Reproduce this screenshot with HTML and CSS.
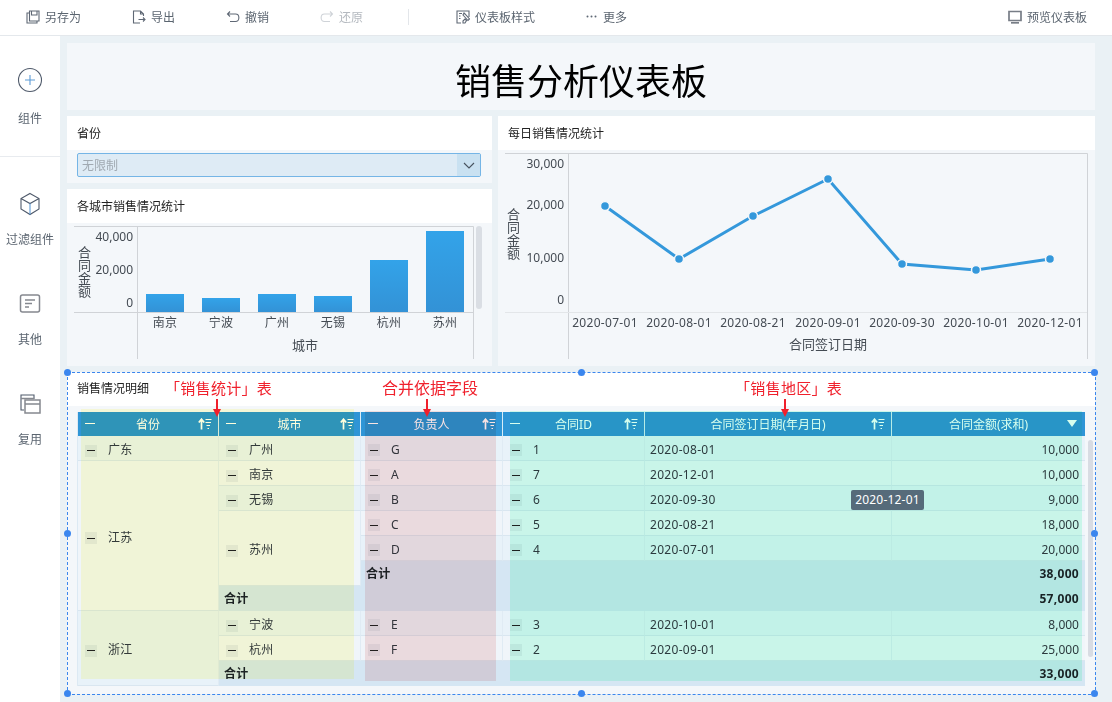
FILE: index.html
```html
<!DOCTYPE html>
<html lang="zh">
<head>
  <meta charset="utf-8">
  <title>销售分析仪表板</title>
  <link rel="stylesheet" href="styles.css">
</head>
<body>
  <header class="toolbar">
    <a class="tool">
      <svg viewBox="0 0 14 14"><path d="M3.5 1H13V11H3.5Z M5.5 1V5H11V1 M3.5 3H1V13H11V11"/></svg>
      <span>另存为</span>
    </a>
    <a class="tool">
      <svg viewBox="0 0 14 14"><path d="M8 13H1.5V1H8.5L11.5 4V6 M8.5 1V4H11.5 M6.5 9.5H13 M11 7.5L13 9.5L11 11.5"/></svg>
      <span>导出</span>
    </a>
    <a class="tool">
      <svg viewBox="0 0 14 14"><path d="M4 1.5L1.5 4L4 6.5 M1.5 4H9.5C14 4 14 11.5 9.5 11.5H4"/></svg>
      <span>撤销</span>
    </a>
    <a class="tool disabled">
      <svg viewBox="0 0 14 14"><path d="M10 1.5L12.5 4L10 6.5 M12.5 4H4.5C0 4 0 11.5 4.5 11.5H10"/></svg>
      <span>还原</span>
    </a>
    <i class="tool-sep"></i>
    <a class="tool">
      <svg viewBox="0 0 14 14"><path d="M5 13H1V1H13V7 M3 3.5H6 M3 6H4.5 M3 8.5H4.5 M8 3L7 5L12 10.5L13.5 9L9 4Z M7 11L9 9L10.5 10.5L9 13H7Z"/></svg>
      <span>仪表板样式</span>
    </a>
    <a class="tool more">
      <svg class="dots" viewBox="0 0 11 3"><circle cx="1.5" cy="1.5" r="1"/><circle cx="5.5" cy="1.5" r="1"/><circle cx="9.5" cy="1.5" r="1"/></svg>
      <span>更多</span>
    </a>
    <a class="tool preview">
      <svg viewBox="0 0 14 14"><path class="thick" d="M1 1.5H13V10.5H1Z"/><path class="thick" d="M3 12.8H11"/></svg>
      <span>预览仪表板</span>
    </a>
  </header>

  <div class="layout">
    <nav class="sidebar">
      <div class="side-top">
        <div class="side-item">
          <svg viewBox="0 0 26 26"><circle cx="13" cy="13" r="11.5"/><path class="blue" d="M13 8V18 M8 13H18"/></svg>
          <span>组件</span>
        </div>
      </div>
      <div class="side-list">
        <div class="side-item">
          <svg viewBox="0 0 26 26"><path d="M13 2.5L22 7.5V18L13 23.5L4 18V7.5Z M4 7.5L13 12.5L22 7.5"/><path class="blue" d="M13 12.5V23.5"/></svg>
          <span>过滤组件</span>
        </div>
        <div class="side-item">
          <svg viewBox="0 0 26 26"><rect class="grey" x="3.5" y="4" width="19" height="17" rx="2"/><path class="grey" d="M8 9H18 M8 12.5H15 M8 16H12"/></svg>
          <span>其他</span>
        </div>
        <div class="side-item">
          <svg viewBox="0 0 26 26"><path d="M7 19H4V4H17V8"/><path class="grey" d="M4 7.5H17"/><rect class="grey" x="8" y="9" width="15" height="13"/><path class="grey" d="M8 13H23"/></svg>
          <span>复用</span>
        </div>
      </div>
    </nav>

    <main class="board">
      <section class="title-panel">
        <h1>销售分析仪表板</h1>
      </section>

      <div class="board-row">
        <div class="left-col">
          <section class="panel filter-panel">
            <div class="panel-head">省份</div>
            <div class="panel-body">
              <div class="select">
                <span>无限制</span>
                <i class="select-btn">
                  <svg viewBox="0 0 12 7"><path d="M1 1L6 6L11 1"/></svg>
                </i>
              </div>
            </div>
          </section>

          <section class="panel bar-panel">
            <div class="panel-head">各城市销售情况统计</div>
            <div class="panel-body">
              <svg class="chart" viewBox="67 223 425 143">
                <defs>
                  <linearGradient id="barFill" x1="0" y1="0" x2="0" y2="1">
                    <stop offset="0" stop-color="#33a3e9"/>
                    <stop offset="1" stop-color="#3392d6"/>
                  </linearGradient>
                </defs>
                <path class="axis" d="M74 226.5H473.5V359 M137.5 226.5V359 M74 312.5H473"/>
                <rect class="track" x="476" y="226" width="6" height="83" rx="3"/>
                <g fill="url(#barFill)">
                  <rect x="146" y="294" width="38" height="18"/>
                  <rect x="202" y="298" width="38" height="14"/>
                  <rect x="258" y="294" width="38" height="18"/>
                  <rect x="314" y="296" width="38" height="16"/>
                  <rect x="370" y="260" width="38" height="52"/>
                  <rect x="426" y="231" width="38" height="81"/>
                </g>
                <g class="ticks-y">
                  <text x="133" y="241">40,000</text>
                  <text x="133" y="274">20,000</text>
                  <text x="133" y="307">0</text>
                </g>
                <text class="axis-y" x="84" y="259">合同</text>
                <text class="axis-y" x="84" y="285">金额</text>
                <g class="ticks-x">
                  <text x="165" y="327">南京</text>
                  <text x="221" y="327">宁波</text>
                  <text x="277" y="327">广州</text>
                  <text x="333" y="327">无锡</text>
                  <text x="389" y="327">杭州</text>
                  <text x="445" y="327">苏州</text>
                  <text class="axis-x" x="305" y="350">城市</text>
                </g>
              </svg>
            </div>
          </section>
        </div>

        <section class="panel line-panel">
          <div class="panel-head">每日销售情况统计</div>
          <div class="panel-body">
            <svg class="chart" viewBox="498 150 597 216">
              <path class="axis" d="M505 153.5H1087.5V359 M568.5 153.5V359"/>
              <path class="axis faint" d="M505 312.5H1087"/>
              <g class="ticks-y">
                <text x="564" y="168">30,000</text>
                <text x="564" y="209">20,000</text>
                <text x="564" y="262">10,000</text>
                <text x="564" y="304">0</text>
              </g>
              <text class="axis-y" x="513" y="221">合同</text>
              <text class="axis-y" x="513" y="247">金额</text>
              <polyline class="series" points="605,206 679,259 753,216 828,179 902,264 976,270 1050,259"/>
              <g class="points">
                <circle cx="605" cy="206" r="4.5"/>
                <circle cx="679" cy="259" r="4.5"/>
                <circle cx="753" cy="216" r="4.5"/>
                <circle cx="828" cy="179" r="4.5"/>
                <circle cx="902" cy="264" r="4.5"/>
                <circle cx="976" cy="270" r="4.5"/>
                <circle cx="1050" cy="259" r="4.5"/>
              </g>
              <g class="ticks-x">
                <text x="605" y="327">2020-07-01</text>
                <text x="679" y="327">2020-08-01</text>
                <text x="753" y="327">2020-08-21</text>
                <text x="828" y="327">2020-09-01</text>
                <text x="902" y="327">2020-09-30</text>
                <text x="976" y="327">2020-10-01</text>
                <text x="1050" y="327">2020-12-01</text>
                <text class="axis-x" x="828" y="349">合同签订日期</text>
              </g>
            </svg>
          </div>
        </section>
      </div>

      <section class="panel detail-panel">
        <div class="panel-head detail-head">销售情况明细</div>
        <div class="detail-body">
          <table class="grid">
            <colgroup>
              <col class="c1"><col class="c2"><col class="c3"><col class="c4"><col class="c5"><col class="c6">
            </colgroup>
            <thead>
              <tr>
                <th><i class="th-minus"></i>省份<svg class="sort" viewBox="0 0 14 12"><path class="sort-up" d="M3.5 11.5V1.5 M0.8 4.5L3.5 1.2L6.2 4.5"/><path d="M7.5 1.5H13.5 M7.5 4.5H13 M8.5 7.5H12 M9.5 10.5H11"/></svg></th>
                <th><i class="th-minus"></i>城市<svg class="sort" viewBox="0 0 14 12"><path class="sort-up" d="M3.5 11.5V1.5 M0.8 4.5L3.5 1.2L6.2 4.5"/><path d="M7.5 1.5H13.5 M7.5 4.5H13 M8.5 7.5H12 M9.5 10.5H11"/></svg></th>
                <th><i class="th-minus"></i>负责人<svg class="sort" viewBox="0 0 14 12"><path class="sort-up" d="M3.5 11.5V1.5 M0.8 4.5L3.5 1.2L6.2 4.5"/><path d="M7.5 1.5H13.5 M7.5 4.5H13 M8.5 7.5H12 M9.5 10.5H11"/></svg></th>
                <th><i class="th-minus"></i>合同ID<svg class="sort" viewBox="0 0 14 12"><path class="sort-up" d="M3.5 11.5V1.5 M0.8 4.5L3.5 1.2L6.2 4.5"/><path d="M7.5 1.5H13.5 M7.5 4.5H13 M8.5 7.5H12 M9.5 10.5H11"/></svg></th>
                <th>合同签订日期(年月日)<svg class="sort" viewBox="0 0 14 12"><path class="sort-up" d="M3.5 11.5V1.5 M0.8 4.5L3.5 1.2L6.2 4.5"/><path d="M7.5 1.5H13.5 M7.5 4.5H13 M8.5 7.5H12 M9.5 10.5H11"/></svg></th>
                <th>合同金额(求和)<i class="th-caret"></i></th>
              </tr>
            </thead>
            <tbody>
              <tr class="dark">
                <td><i class="tog"></i>广东</td><td><i class="tog"></i>广州</td><td><i class="tog"></i>G</td><td><i class="tog"></i>1</td><td class="date">2020-08-01</td><td class="amt">10,000</td>
              </tr>
              <tr class="light">
                <td rowspan="6"><i class="tog"></i>江苏</td><td><i class="tog"></i>南京</td><td><i class="tog"></i>A</td><td><i class="tog"></i>7</td><td class="date">2020-12-01</td><td class="amt">10,000</td>
              </tr>
              <tr class="dark">
                <td><i class="tog"></i>无锡</td><td><i class="tog"></i>B</td><td><i class="tog"></i>6</td><td class="date">2020-09-30</td><td class="amt">9,000</td>
              </tr>
              <tr class="light">
                <td rowspan="3"><i class="tog"></i>苏州</td><td><i class="tog"></i>C</td><td><i class="tog"></i>5</td><td class="date">2020-08-21</td><td class="amt">18,000</td>
              </tr>
              <tr class="dark">
                <td><i class="tog"></i>D</td><td><i class="tog"></i>4</td><td class="date">2020-07-01</td><td class="amt">20,000</td>
              </tr>
              <tr class="total">
                <td colspan="3">合计</td><td class="amt">38,000</td>
              </tr>
              <tr class="total">
                <td colspan="4">合计</td><td class="amt">57,000</td>
              </tr>
              <tr class="dark">
                <td rowspan="3"><i class="tog"></i>浙江</td><td><i class="tog"></i>宁波</td><td><i class="tog"></i>E</td><td><i class="tog"></i>3</td><td class="date">2020-10-01</td><td class="amt">8,000</td>
              </tr>
              <tr class="light">
                <td><i class="tog"></i>杭州</td><td><i class="tog"></i>F</td><td><i class="tog"></i>2</td><td class="date">2020-09-01</td><td class="amt">25,000</td>
              </tr>
              <tr class="total">
                <td colspan="4">合计</td><td class="amt">33,000</td>
              </tr>
            </tbody>
          </table>
          <div class="grid-scroll"></div>
        </div>

        <!-- 标注色块 -->
        <div class="shade shade-green"></div>
        <div class="shade shade-pink"></div>
        <div class="shade shade-teal"></div>

        <span class="note note-a">「销售统计」表</span>
        <span class="note note-b">合并依据字段</span>
        <span class="note note-c">「销售地区」表</span>
        <i class="arrow arrow-a"></i>
        <i class="arrow arrow-b"></i>
        <i class="arrow arrow-c"></i>

        <div class="tip">2020-12-01</div>

        <!-- 选中框 -->
        <div class="selection">
          <i class="dot tl"></i><i class="dot tc"></i><i class="dot tr"></i>
          <i class="dot ml"></i><i class="dot mr"></i>
          <i class="dot bl"></i><i class="dot bc"></i><i class="dot br"></i>
        </div>
      </section>
    </main>
  </div>
</body>
</html>
```

FILE: styles.css
```css
:root {
  --bg: #eaf1f5;
  --panel: #f4f7fa;
  --line: #d3d6da;
  --text: #333a42;
  --muted: #5b6570;
  --blue: #3b86ee;
  --red: #f0202c;
}
* {
  box-sizing: border-box;
}
html, body {
  height: 100%;
}
body {
  margin: 0;
  overflow: hidden;
  background: var(--bg);
  color: var(--text);
  font-family: "Noto Sans", "Noto Sans CJK SC", sans-serif;
  font-size: 12px;
}

/* 顶部工具栏 */
.toolbar {
  display: flex;
  align-items: center;
  gap: 51px;
  height: 36px;
  padding: 0 25px 2px 26px;
  background: #fff;
  border-bottom: 1px solid #e4e8ec;
  color: var(--muted);
}
.tool {
  display: flex;
  align-items: center;
  gap: 5px;
}
.tool svg {
  width: 14px;
  height: 14px;
  fill: none;
  stroke: #5f6875;
  stroke-width: 1.1;
}
.tool svg.dots {
  width: 11px;
  height: 3px;
  fill: #5f6875;
  stroke: none;
}
.tool svg .thick {
  stroke: #777d86;
  stroke-width: 1.7;
}
.tool.disabled {
  color: #b4b9bf;
}
.tool.disabled svg {
  stroke: #cfd3d8;
}
.tool.more {
  gap: 6px;
}
.tool-sep {
  width: 1px;
  height: 16px;
  margin: 0 -4px 0 -6px;
  background: #e3e6ea;
}
.preview {
  margin-left: auto;
}

.layout {
  display: flex;
  height: 666px;
}

/* 左侧栏 */
.sidebar {
  flex: none;
  width: 60px;
  background: #fff;
  color: var(--muted);
}
.side-top {
  height: 121px;
  padding-top: 31px;
  border-bottom: 1px solid #e8ebef;
}
.side-list {
  padding-top: 34px;
}
.side-list .side-item {
  height: 100px;
  gap: 13px;
}
.side-item {
  display: flex;
  flex-direction: column;
  align-items: center;
  gap: 16px;
  white-space: nowrap;
}
.side-item svg {
  width: 26px;
  height: 26px;
  fill: none;
  stroke: #4f5a6b;
  stroke-width: 1.1;
}
.side-item svg .blue {
  stroke: #5d9bd5;
}
.side-item svg .grey {
  stroke: #85888f;
  stroke-width: 1.5;
}

/* 仪表板 */
.board {
  flex: none;
  width: 1052px;
  padding: 7px 17px 8px 7px;
  display: flex;
  flex-direction: column;
  gap: 6px;
}
.title-panel {
  height: 67px;
  background: var(--panel);
  display: flex;
  align-items: center;
  justify-content: center;
}
.title-panel h1 {
  margin: 11px 0 0;
  color: #000;
  font-size: 36px;
  font-weight: 400;
  line-height: 1;
}
.board-row {
  display: flex;
  gap: 6px;
  height: 250px;
}
.left-col {
  width: 425px;
  display: flex;
  flex-direction: column;
  gap: 6px;
}
.panel {
  background: var(--panel);
  display: flex;
  flex-direction: column;
}
.panel-head {
  flex: none;
  height: 34px;
  padding: 0 10px;
  background: #fff;
  color: #222;
  line-height: 36px;
}
.panel-body {
  flex: 1;
  min-height: 0;
}
.filter-panel {
  height: 67px;
}
.bar-panel {
  flex: 1;
}
.line-panel {
  flex: 1;
}
.select {
  display: flex;
  align-items: center;
  justify-content: space-between;
  height: 24px;
  margin: 3px 11px 0 10px;
  padding-left: 4px;
  background: #deebf5;
  border: 1px solid #75b5e6;
  border-radius: 2px;
  color: #a0a9b1;
}
.select span {
  padding-bottom: 1px;
}
.select-btn {
  display: flex;
  align-items: center;
  justify-content: center;
  width: 23px;
  height: 22px;
  background: #c9e1f1;
}
.select-btn svg {
  width: 12px;
  height: 7px;
  fill: none;
  stroke: #47525e;
  stroke-width: 1.1;
}

/* 图表 */
.chart {
  display: block;
  width: 100%;
  height: 100%;
  font-family: "Noto Sans", "Noto Sans CJK SC", sans-serif;
  font-size: 12px;
  fill: #444b53;
}
.axis {
  fill: none;
  stroke: #d0d3d7;
}
.axis.faint {
  stroke: #e3e6e9;
}
.track {
  fill: #dadee4;
}
.ticks-y text {
  text-anchor: end;
}
.ticks-x text {
  text-anchor: middle;
  letter-spacing: .3px;
}
.ticks-x .axis-x {
  font-size: 13px;
  letter-spacing: 0;
}
.axis-y {
  font-size: 13px;
  writing-mode: vertical-rl;
  text-anchor: middle;
}
.series {
  fill: none;
  stroke: #3498db;
  stroke-width: 3;
}
.points circle {
  fill: #3498db;
  stroke: #f4f7fa;
  stroke-width: 1.5;
}

/* 明细表 */
.detail-panel {
  position: relative;
  height: 322px;
  padding-top: 1px;
}
.detail-head {
  height: 33px;
  line-height: 32px;
}
.detail-body {
  display: flex;
  align-items: flex-start;
  padding: 6px 0 0 11px;
}
.grid {
  flex: none;
  width: 1007px;
  table-layout: fixed;
  border-collapse: separate;
  border-spacing: 0;
  box-shadow: -1px 0 0 #dce9f3;
  letter-spacing: .3px;
}
.c1 { width: 141px; }
.c2 { width: 142px; }
.c3 { width: 142px; }
.c4 { width: 142px; }
.c5 { width: 247px; }
.c6 { width: 193px; }
.grid th {
  position: relative;
  height: 24px;
  padding: 0;
  background: #2f95d6;
  border-right: 1px solid #d9ecf8;
  color: #fff;
  font-weight: 400;
  text-align: center;
  letter-spacing: 0;
}
.grid th:last-child {
  border-right: 0;
}
.th-minus {
  position: absolute;
  left: 7px;
  top: 11px;
  width: 10px;
  height: 1px;
  background: #fff;
}
.sort {
  position: absolute;
  right: 6px;
  top: 6px;
  width: 14px;
  height: 12px;
  fill: none;
  stroke: #fff;
  stroke-width: 1.1;
}
.sort .sort-up {
  stroke-width: 1.7;
}
.th-caret {
  position: absolute;
  right: 8px;
  top: 8px;
  border: 5px solid transparent;
  border-top: 7px solid #fff;
  border-bottom: 0;
}
.grid td {
  height: 25px;
  padding: 2px 5px 0 7px;
  border-right: 1px solid #e0ebf4;
  border-bottom: 1px solid #d9e6f0;
  white-space: nowrap;
}
.grid td:last-child {
  border-right: 0;
}
.grid td.date {
  padding-left: 5px;
}
.dark td {
  background: #e8f2f9;
}
.light td {
  background: #f0f5fa;
}
.total td {
  padding-top: 0;
  background: #d5e6f3;
  border-color: #d5e6f3;
  font-weight: 700;
  color: #1c2227;
}
.total td:first-child {
  padding-left: 5px;
}
.grid td.amt {
  padding-right: 6px;
  text-align: right;
  letter-spacing: 0;
}
.grid .total td.amt {
  letter-spacing: .3px;
}
.tog {
  display: inline-flex;
  align-items: center;
  justify-content: center;
  width: 12px;
  height: 12px;
  margin-right: 11px;
  background: rgba(70, 90, 100, .08);
  vertical-align: middle;
}
.tog::before {
  content: "";
  width: 8px;
  height: 1px;
  background: #222;
}
.grid-scroll {
  flex: none;
  width: 5px;
  height: 217px;
  margin: 28px 0 0 3px;
  border-radius: 3px;
  background: #d8dce3;
}

/* 标注 */
.shade {
  position: absolute;
  mix-blend-mode: multiply;
  pointer-events: none;
}
.shade-green {
  left: 14px;
  top: 37px;
  width: 273px;
  height: 270px;
  background: rgb(255, 254, 220);
}
.shade-pink {
  left: 298px;
  top: 39px;
  width: 131px;
  height: 270px;
  background: rgb(249, 227, 227);
}
.shade-teal {
  left: 443px;
  top: 39px;
  width: 572px;
  height: 270px;
  background: rgb(214, 255, 238);
}
.note {
  position: absolute;
  top: 5px;
  color: var(--red);
  line-height: 22px;
  white-space: nowrap;
}
.note-a { left: 98px; font-size: 15px; letter-spacing: .3px; }
.note-b { left: 315px; font-size: 16px; }
.note-c { left: 668px; font-size: 15px; letter-spacing: .3px; }
.arrow {
  position: absolute;
  top: 27px;
  width: 2px;
  height: 11px;
  background: var(--red);
}
.arrow::after {
  content: "";
  position: absolute;
  left: -3px;
  top: 10px;
  border: 4px solid transparent;
  border-top: 8px solid var(--red);
  border-bottom: 0;
}
.arrow-a { left: 149px; }
.arrow-b { left: 359px; }
.arrow-c { left: 717px; }
.tip {
  position: absolute;
  left: 784px;
  top: 118px;
  width: 73px;
  height: 20px;
  background: #566b7a;
  border-radius: 2px;
  color: #fff;
  line-height: 20px;
  text-align: center;
  letter-spacing: .2px;
}
.selection {
  position: absolute;
  left: 0;
  top: 0;
  right: -1px;
  bottom: -1px;
  border: 1px dashed var(--blue);
  pointer-events: none;
}
.dot {
  position: absolute;
  width: 7px;
  height: 7px;
  margin: -4px 0 0 -4px;
  border-radius: 50%;
  background: var(--blue);
}
.tl, .tc, .tr { top: 0; }
.ml, .mr { top: 50%; }
.bl, .bc, .br { top: 100%; }
.tl, .ml, .bl { left: 0; }
.tc, .bc { left: 50%; }
.tr, .mr, .br { left: 100%; }
```
